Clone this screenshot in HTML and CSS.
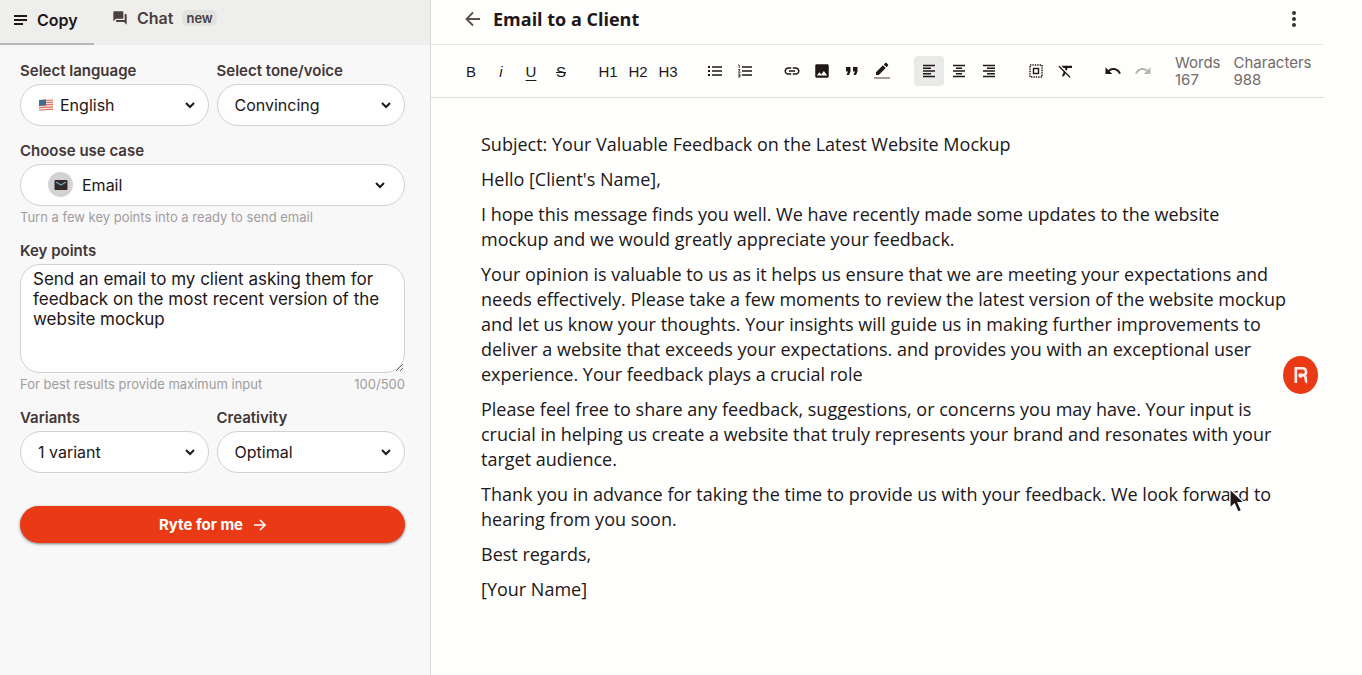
FILE: index.html
```html
<!DOCTYPE html>
<html lang="en">
<head>
    <meta charset="UTF-8">
    <meta name="viewport" content="width=device-width, initial-scale=1.0">
    <title>Email to a Client - Rytr</title>
    <link rel="stylesheet" href="styles.css">
</head>
<body>
    <div class="app">
        <aside class="sidebar">
            <nav class="tabs">
                <a href="#copy" class="tab active">
                    <svg width="14" height="12" viewBox="0 0 14 12"><path d="M0 2h13M0 6h13M0 10h9" stroke="currentColor" stroke-width="2"/></svg>
                    Copy
                </a>
                <a href="#chat" class="tab">
                    <svg width="16" height="16" viewBox="0 0 24 24"><path fill="currentColor" d="M21 6h-2v9H6v2c0 .55.45 1 1 1h11l4 4V7c0-.55-.45-1-1-1zm-4 6V3c0-.55-.45-1-1-1H3c-.55 0-1 .45-1 1v14l4-4h10c.55 0 1-.45 1-1z"/></svg>
                    Chat
                    <span class="badge">new</span>
                </a>
            </nav>

            <form class="panel">
                <div class="form-row">
                    <div class="form-group">
                        <label for="language">Select language</label>
                        <div class="select-box has-flag">
                            <svg class="flag" width="16" height="12" viewBox="0 0 16 12">
                                <path fill="#f3f0ee" d="M1 1l14-1v11L1 12z"/>
                                <path stroke="#e2705f" stroke-width="1.2" d="M1 1.8L15 1M1 4L15 3.2M1 6.2l14-.8M1 8.6l14-.8M1 11l14-.8"/>
                                <path fill="#3f6d8e" d="M1 1l7-.5v6L1 7z"/>
                            </svg>
                            <select id="language" name="language">
                                <option>English</option>
                            </select>
                            <svg class="chevron" width="10" height="7" viewBox="0 0 10 7"><path d="M1 1l4 4 4-4" fill="none" stroke="currentColor" stroke-width="2"/></svg>
                        </div>
                    </div>
                    <div class="form-group">
                        <label for="tone">Select tone/voice</label>
                        <div class="select-box">
                            <select id="tone" name="tone">
                                <option>Convincing</option>
                            </select>
                            <svg class="chevron" width="10" height="7" viewBox="0 0 10 7"><path d="M1 1l4 4 4-4" fill="none" stroke="currentColor" stroke-width="2"/></svg>
                        </div>
                    </div>
                </div>

                <div class="form-group">
                    <label for="usecase">Choose use case</label>
                    <div class="select-box wide">
                        <span class="case-icon">
                            <svg width="14" height="12" viewBox="0 0 14 12"><rect x="0.5" y="1" width="13" height="10" rx="1" fill="#33282a"/><path d="M2 3l5 3 5-3" fill="none" stroke="#6aa5bd" stroke-width="1.4"/></svg>
                        </span>
                        <select id="usecase" name="usecase">
                            <option>Email</option>
                        </select>
                        <svg class="chevron" width="10" height="7" viewBox="0 0 10 7"><path d="M1 1l4 4 4-4" fill="none" stroke="currentColor" stroke-width="2"/></svg>
                    </div>
                    <p class="hint">Turn a few key points into a ready to send email</p>
                </div>

                <div class="form-group">
                    <label for="keypoints">Key points</label>
                    <textarea id="keypoints" name="keypoints" spellcheck="false">Send an email to my client asking them for feedback on the most recent version of the website mockup</textarea>
                    <p class="hint"><span>For best results provide maximum input</span><span>100/500</span></p>
                </div>

                <div class="form-row">
                    <div class="form-group">
                        <label for="variants">Variants</label>
                        <div class="select-box">
                            <select id="variants" name="variants">
                                <option>1 variant</option>
                            </select>
                            <svg class="chevron" width="10" height="7" viewBox="0 0 10 7"><path d="M1 1l4 4 4-4" fill="none" stroke="currentColor" stroke-width="2"/></svg>
                        </div>
                    </div>
                    <div class="form-group">
                        <label for="creativity">Creativity</label>
                        <div class="select-box">
                            <select id="creativity" name="creativity">
                                <option>Optimal</option>
                            </select>
                            <svg class="chevron" width="10" height="7" viewBox="0 0 10 7"><path d="M1 1l4 4 4-4" fill="none" stroke="currentColor" stroke-width="2"/></svg>
                        </div>
                    </div>
                </div>

                <button type="submit" class="btn">
                    Ryte for me
                    <svg width="12" height="12" viewBox="0 0 12 12"><path d="M0 6h11M6 1l5 5-5 5" fill="none" stroke="currentColor" stroke-width="1.6"/></svg>
                </button>
            </form>
        </aside>

        <main class="editor">
            <header class="doc-header">
                <button type="button" class="icon-btn" aria-label="Back">
                    <svg width="16" height="16" viewBox="0 0 16 16"><path d="M15 8H2M8 1.5L1.5 8 8 14.5" fill="none" stroke="#5b4f50" stroke-width="1.8"/></svg>
                </button>
                <h1>Email to a Client</h1>
                <button type="button" class="icon-btn more" aria-label="More">
                    <svg width="6" height="18" viewBox="0 0 6 18" fill="#3c3031"><circle cx="3" cy="3" r="2"/><circle cx="3" cy="9" r="2"/><circle cx="3" cy="15" r="2"/></svg>
                </button>
            </header>

            <div class="toolbar">
                <div class="tools">
                    <button type="button">B</button>
                    <button type="button" class="italic">i</button>
                    <button type="button" class="underline">U</button>
                    <button type="button" class="strike">S</button>
                </div>
                <div class="tools">
                    <button type="button">H1</button>
                    <button type="button">H2</button>
                    <button type="button">H3</button>
                </div>
                <div class="tools">
                    <button type="button" aria-label="Bullet list">
                        <svg width="14" height="12" viewBox="0 0 14 12"><path d="M4 2h10M4 6h10M4 10h10" stroke="currentColor" stroke-width="1.5"/><path d="M0 2h2M0 6h2M0 10h2" stroke="currentColor" stroke-width="2"/></svg>
                    </button>
                    <button type="button" aria-label="Numbered list">
                        <svg width="14" height="14" viewBox="0 0 14 14"><path d="M4 3h10M4 7h10M4 11h10" stroke="currentColor" stroke-width="1.5"/><path d="M0 1h1.3v3M0 5.5h2L.5 8.3h2M0 10h2v3H0M.5 11.500H2" fill="none" stroke="currentColor" stroke-width=".8"/></svg>
                    </button>
                </div>
                <div class="tools">
                    <button type="button" aria-label="Link">
                        <svg width="18" height="18" viewBox="0 0 24 24"><path fill="currentColor" d="M3.9 12c0-1.71 1.39-3.1 3.1-3.1h4V7H7c-2.76 0-5 2.24-5 5s2.24 5 5 5h4v-1.9H7c-1.71 0-3.1-1.39-3.1-3.1zM8 13h8v-2H8v2zm9-6h-4v1.9h4c1.71 0 3.1 1.39 3.1 3.1s-1.39 3.1-3.1 3.1h-4V17h4c2.76 0 5-2.24 5-5s-2.24-5-5-5z"/></svg>
                    </button>
                    <button type="button" aria-label="Image">
                        <svg width="18" height="18" viewBox="0 0 24 24"><path fill="currentColor" d="M21 19V5c0-1.1-.9-2-2-2H5c-1.1 0-2 .9-2 2v14c0 1.1.9 2 2 2h14c1.1 0 2-.9 2-2zM8.500 13.500l2.500 3.010L14.500 12l4.500 6H5l3.500-4.500z"/></svg>
                    </button>
                    <button type="button" aria-label="Quote">
                        <svg width="14" height="10" viewBox="0 0 14 10"><path fill="currentColor" d="M1 1h4.500v4.500L4 9H1.500L3 5.500H1zM8 1h4.500v4.500L11 9H8.500L10 5.500H8z"/></svg>
                    </button>
                    <button type="button" aria-label="Highlight">
                        <svg width="18" height="18" viewBox="0 0 18 18"><path fill="currentColor" d="M3 10.200V13h2.800l6.900-6.900-2.800-2.800zM13.600 5.200l1.400-1.400c.4-.4.4-1 0-1.400L13.600 1c-.4-.4-1-.4-1.400 0l-1.400 1.400z"/><path fill="#a79c9e" d="M1 15h16v2H1z"/></svg>
                    </button>
                </div>
                <div class="tools">
                    <button type="button" class="selected" aria-label="Align left">
                        <svg width="12" height="14" viewBox="0 0 12 14"><path d="M0 1.500h12M0 4.300h8M0 7h12M0 9.700h8M0 12.500h12" stroke="currentColor" stroke-width="1.4"/></svg>
                    </button>
                    <button type="button" aria-label="Align center">
                        <svg width="12" height="14" viewBox="0 0 12 14"><path d="M0 1.500h12M3 4.300h6M0 7h12M3 9.700h6M0 12.500h12" stroke="currentColor" stroke-width="1.4"/></svg>
                    </button>
                    <button type="button" aria-label="Align right">
                        <svg width="12" height="14" viewBox="0 0 12 14"><path d="M0 1.500h12M4 4.300h8M0 7h12M4 9.700h8M0 12.500h12" stroke="currentColor" stroke-width="1.4"/></svg>
                    </button>
                </div>
                <div class="tools">
                    <button type="button" aria-label="Select all">
                        <svg width="14" height="14" viewBox="0 0 14 14" fill="none" stroke="currentColor"><rect x="1" y="1" width="12" height="12" stroke-width="1.5" stroke-dasharray="1.4 1"/><rect x="4.5" y="4.5" width="5" height="5" stroke-width="1.4"/></svg>
                    </button>
                    <button type="button" aria-label="Clear formatting">
                        <svg width="18" height="18" viewBox="0 0 24 24"><path fill="currentColor" d="M3.270 5L2 6.270l6.970 6.970L6.500 19h3l1.570-3.660L16.730 21 18 19.730 3.550 5.270 3.270 5zM6 5v.18L8.820 8h2.400l-.72 1.680 2.100 2.100L14.210 8H20V5H6z"/></svg>
                    </button>
                </div>
                <div class="tools">
                    <button type="button" aria-label="Undo">
                        <svg width="18" height="18" viewBox="0 0 24 24"><path fill="currentColor" d="M12.500 8c-2.650 0-5.050.99-6.900 2.600L2 7v9h9l-3.620-3.620c1.390-1.160 3.160-1.880 5.120-1.880 3.540 0 6.550 2.310 7.600 5.500l2.370-.78C21.080 11.030 17.150 8 12.500 8z"/></svg>
                    </button>
                    <button type="button" aria-label="Redo" disabled>
                        <svg width="18" height="18" viewBox="0 0 24 24"><path fill="currentColor" d="M18.400 10.600C16.550 8.990 14.150 8 11.500 8c-4.650 0-8.580 3.030-9.960 7.220L3.900 16c1.050-3.190 4.050-5.500 7.600-5.500 1.950 0 3.730.72 5.120 1.880L13 16h9V7l-3.600 3.600z"/></svg>
                    </button>
                </div>
                <div class="counts">
                    <div>Words<br>167</div>
                    <div>Characters<br>988</div>
                </div>
            </div>

            <article class="document">
                <p>Subject: Your Valuable Feedback on the Latest Website Mockup</p>
                <p>Hello [Client's Name],</p>
                <p>I hope this message finds you well. We have recently made some updates to the website mockup and we would greatly appreciate your feedback.</p>
                <p>Your opinion is valuable to us as it helps us ensure that we are meeting your expectations and needs effectively. Please take a few moments to review the latest version of the website mockup and let us know your thoughts. Your insights will guide us in making further improvements to deliver a website that exceeds your expectations. and provides you with an exceptional user experience. Your feedback plays a crucial role</p>
                <p>Please feel free to share any feedback, suggestions, or concerns you may have. Your input is crucial in helping us create a website that truly represents your brand and resonates with your target audience.</p>
                <p>Thank you in advance for taking the time to provide us with your feedback. We look forward to hearing from you soon.</p>
                <p>Best regards,</p>
                <p>[Your Name]</p>
            </article>
        </main>
    </div>

    <button type="button" class="launcher" aria-label="Open Rytr">
        <svg width="16" height="20" viewBox="0 0 16 20" fill="none" stroke="#fbeeea" stroke-width="2.6"><path d="M2.800 18V3.300H9.500c4.500 0 4.500 6 1.300 6.800H7.500M10.500 10.100c1.800.6 2.300 2 2.300 4.500 0 1.500.3 2.500 1.500 2.500"/><circle cx="7.500" cy="10.500" r="1" fill="#fbeeea"/></svg>
    </button>
    <svg class="pointer" width="18" height="28" viewBox="0 0 18 28"><path d="M2 2v19l4.500-4 3.500 8 3.500-1.500L10 15.500h6z" fill="#211718" stroke="#fff" stroke-width="1.2"/></svg>
</body>
</html>
```
FILE: styles.css
```css
* {
    box-sizing: border-box;
}
body {
    font-family: Inter, sans-serif;
    background-color: #fefefd;
    color: #211718;
    margin: 0;
}
svg {
    display: block;
    flex-shrink: 0;
}
button, select, textarea {
    font-family: inherit;
    color: inherit;
}
.app {
    display: flex;
    min-height: 100vh;
}

/* Sidebar */
.sidebar {
    flex: 0 0 431px;
    background-color: #f8f8f8;
    border-right: 1px solid #d9d9d8;
}
.tabs {
    display: flex;
    gap: 18px;
    height: 45px;
    background-color: #eeeeec;
}
.tab {
    display: flex;
    align-items: center;
    gap: 9px;
    padding-bottom: 10px;
    color: #4b3f40;
    font-size: 16px;
    font-weight: 600;
    text-decoration: none;
}
.tab.active {
    width: 94px;
    padding: 0 0 4px 14px;
    border-bottom: 2px solid #b9b5b4;
    color: #211718;
}
.badge {
    background-color: #e2e2e0;
    border-radius: 6px;
    padding: 0 4px;
    font-size: 13px;
    line-height: 16px;
}
.panel {
    padding: 16px 25px 16px 20px;
}
.form-row {
    display: flex;
    gap: 8px;
}
.form-row .form-group {
    flex: 1;
}
.form-group {
    margin-bottom: 15px;
}
label {
    display: block;
    margin-bottom: 3px;
    color: #433637;
    font-size: 15px;
    font-weight: 600;
    line-height: 20px;
}
.select-box {
    position: relative;
}
select {
    display: block;
    width: 100%;
    height: 42px;
    padding: 0 36px 0 17px;
    appearance: none;
    background-color: #fefefe;
    border: 1px solid #d3d1d0;
    border-radius: 21px;
    font-size: 16px;
}
.has-flag select {
    padding-left: 39px;
}
.wide select {
    padding-left: 61px;
}
.chevron {
    position: absolute;
    top: 18px;
    right: 14px;
    pointer-events: none;
}
.wide .chevron {
    right: 20px;
}
.flag {
    position: absolute;
    top: 15px;
    left: 18px;
}
.case-icon {
    position: absolute;
    top: 8px;
    left: 28px;
    display: flex;
    align-items: center;
    justify-content: center;
    width: 25px;
    height: 25px;
    background-color: #d3d2d2;
    border-radius: 50%;
}
textarea {
    display: block;
    width: 100%;
    height: 109px;
    padding: 4px 12px;
    background-color: #fefefe;
    border: 1px solid #d3d1d0;
    border-radius: 20px;
    font-size: 17px;
    line-height: 20px;
}
.hint {
    display: flex;
    justify-content: space-between;
    margin: 3px 0 0;
    color: #a29c9c;
    font-size: 13px;
    line-height: 17px;
}
.btn {
    display: flex;
    align-items: center;
    justify-content: center;
    gap: 11px;
    width: 100%;
    height: 37px;
    margin-top: 18px;
    background-color: #e93a15;
    color: #fff;
    border: none;
    border-radius: 19px;
    box-shadow: 0 1px 3px rgba(0,0,0,0.5);
    font-size: 15px;
    font-weight: 700;
    cursor: pointer;
}

/* Editor */
.editor {
    flex: 1;
    min-width: 0;
    margin-right: 38px;
}
.doc-header {
    display: flex;
    align-items: center;
    height: 45px;
    padding: 0 27px 6px 34px;
    border-bottom: 1px solid #e6e5e4;
}
.icon-btn {
    padding: 0;
    background: none;
    border: none;
    cursor: pointer;
}
.more {
    margin-left: auto;
}
h1 {
    margin: 0 0 0 12px;
    font-family: "Open Sans", sans-serif;
    font-size: 18px;
    font-weight: 700;
}
.toolbar {
    display: flex;
    align-items: center;
    gap: 17px;
    height: 53px;
    padding: 0 13px 0 25px;
    border-bottom: 1px solid #e0dfde;
}
.tools {
    display: flex;
}
.tools button {
    display: flex;
    align-items: center;
    justify-content: center;
    width: 30px;
    height: 30px;
    padding: 0;
    background: none;
    border: none;
    border-radius: 4px;
    font-family: "Liberation Sans", sans-serif;
    font-size: 15px;
    cursor: pointer;
}
.tools .italic {
    font-style: italic;
}
.tools .underline {
    text-decoration: underline;
    text-underline-offset: 3px;
}
.tools .strike {
    text-decoration: line-through;
}
.tools .selected {
    background-color: #e9e9e8;
}
.tools button:disabled {
    color: #b9b4b4;
}
.counts {
    display: flex;
    gap: 13px;
    margin-left: auto;
    color: #736a6b;
    font-size: 15px;
    line-height: 17px;
}
.document {
    padding: 34px 36px 34px 50px;
    font-family: "Open Sans", sans-serif;
    font-size: 18px;
    line-height: 25px;
}
.document p {
    margin: 0 0 10px;
}

/* Floating items */
.launcher {
    position: fixed;
    top: 356px;
    right: 44px;
    display: flex;
    align-items: center;
    justify-content: center;
    width: 35px;
    height: 38px;
    padding: 0;
    background-color: #e93a15;
    border: none;
    border-radius: 50%;
    cursor: pointer;
}
.pointer {
    position: fixed;
    top: 487px;
    right: 116px;
}
```
